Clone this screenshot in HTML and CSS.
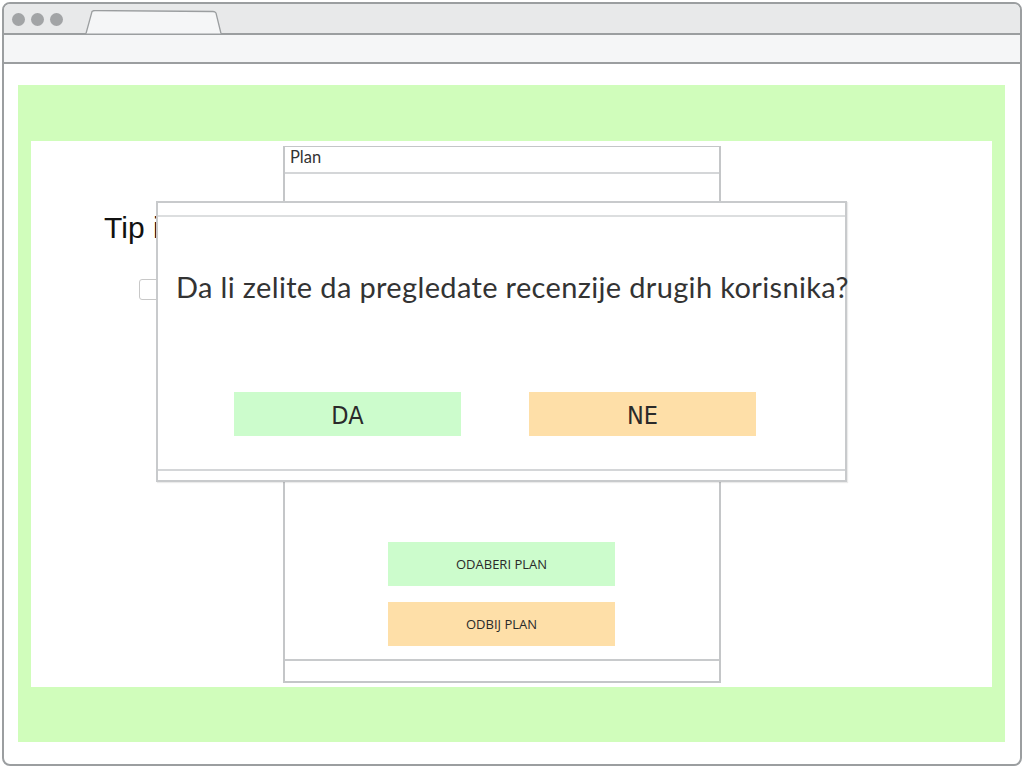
FILE: index.html
```html
<!DOCTYPE html>
<html>
<head>
<meta charset="utf-8">
<link rel="stylesheet" href="styles.css">
</head>
<body>
<div class="window">
  <div class="tabbar">
    <div class="dots"><span class="dot"></span><span class="dot"></span><span class="dot"></span></div>
    <svg class="tab" width="138" height="24" viewBox="0 0 138 24">
      <path d="M1 23.5 L7 1.5 Q8 0.5 10 0.5 L128 1.5 Q130 1.5 131 3 L136 23.5" fill="#f5f6f7" stroke="#9b9ea0" stroke-width="1.3"/>
    </svg>
  </div>
  <div class="addressbar"></div>
  <div class="content">
    <div class="green">
      <div class="canvas">
        <div class="left">
          <div class="tip">Tip i</div>
          <div class="check"></div>
        </div>
        <div class="panel">
          <div class="panel-head">Plan</div>
          <div class="panel-body">
            <div class="btn green-btn small">ODABERI PLAN</div>
            <div class="btn orange-btn small">ODBIJ PLAN</div>
          </div>
          <div class="panel-foot"></div>
        </div>
        <div class="modal">
          <div class="modal-head"></div>
          <div class="modal-body">
            <div class="question">Da li zelite da pregledate recenzije drugih korisnika?</div>
            <div class="modal-actions">
              <div class="btn green-btn big">DA</div>
              <div class="btn orange-btn big">NE</div>
            </div>
          </div>
          <div class="modal-foot"></div>
        </div>
      </div>
    </div>
  </div>
</div>
</body>
</html>
```
FILE: styles.css
```css
* { box-sizing: border-box; }
html, body { margin: 0; padding: 0; background: #fff; }
body { width: 1024px; height: 768px; overflow: hidden; font-family: "Open Sans", sans-serif; }

.window {
  margin: 2px;
  width: 1020px;
  height: 764px;
  border: 2px solid #9b9ea0;
  border-radius: 8px;
  overflow: hidden;
  background: #fff;
  display: flex;
  flex-direction: column;
}
.tabbar {
  height: 31px;
  background: #e8e9ea;
  border-bottom: 2px solid #9b9ea0;
  display: flex;
  align-items: flex-end;
  padding-left: 8px;
  flex-shrink: 0;
}
.dots {
  display: flex;
  gap: 6px;
  align-self: center;
  margin-top: 2px;
}
.dot {
  width: 13px;
  height: 13px;
  border-radius: 50%;
  background: #a2a4a6;
}
.tab {
  display: block;
  margin-left: 22px;
  margin-bottom: -1px;
}
.addressbar {
  height: 29px;
  background: #f5f6f7;
  border-bottom: 2px solid #9b9ea0;
  flex-shrink: 0;
}
.content {
  padding: 21px 14px 0 14px;
}
.green {
  background: #d0fdbb;
  width: 987px;
  height: 657px;
  padding: 56px 13px 55px 13px;
}
.canvas {
  position: relative;
  background: #fff;
  height: 546px;
  display: flex;
  padding-top: 5px;
}
.left {
  width: 252px;
  padding-left: 73px;
  padding-top: 64px;
}
.tip {
  font-family: "Liberation Sans", sans-serif;
  font-size: 30px;
  color: #111;
  line-height: 36px;
}
.check {
  margin-top: 33px;
  margin-left: 35px;
  width: 21px;
  height: 21px;
  border: 1px solid #c8c8c8;
  border-radius: 3px;
  background: #fff;
}
.panel {
  width: 438px;
  height: 537px;
  border: 2px solid #c4c6c8;
  border-top-width: 1.5px;
  display: flex;
  flex-direction: column;
}
.panel-head {
  height: 27px;
  border-bottom: 2px solid #d4d6d8;
  font-family: "Lato", sans-serif;
  font-size: 16.5px;
  line-height: 20px;
  color: #333;
  padding: 0 0 0 5px;
}
.panel-body {
  flex: 1;
  display: flex;
  flex-direction: column;
  align-items: flex-start;
  padding: 368px 0 0 103px;
  gap: 16px;
}
.panel-foot {
  height: 22px;
  border-top: 2px solid #c8cacc;
}
.btn {
  width: 227px;
  height: 44px;
  display: flex;
  align-items: center;
  justify-content: center;
  color: #2a2a2a;
}
.green-btn { background: #ccfccc; }
.orange-btn { background: #fedfa8; }
.small {
  font-family: "Open Sans", sans-serif;
  font-size: 13px;
}
.big {
  font-family: "DejaVu Sans Condensed", "DejaVu Sans", sans-serif;
  font-stretch: condensed;
  font-size: 25px;
  padding-top: 2px;
}
.modal {
  position: absolute;
  left: 125px;
  top: 60px;
  width: 691px;
  height: 281px;
  background: #fff;
  border: 2px solid #c8cacc;
  box-shadow: 1px 1px 1px rgba(0,0,0,0.08);
  display: flex;
  flex-direction: column;
}
.modal-head {
  height: 14px;
  border-bottom: 2px solid #dcdedf;
}
.modal-body {
  flex: 1;
  padding: 52px 0 0 18px;
}
.question {
  font-family: "Lato", sans-serif;
  font-size: 29px;
  letter-spacing: 0.35px;
  color: #333;
  line-height: 36px;
  white-space: nowrap;
}
.modal-actions {
  display: flex;
  gap: 68px;
  padding-left: 58px;
  margin-top: 87px;
}
.modal-foot {
  height: 11px;
  border-top: 2px solid #d4d6d8;
}
```
